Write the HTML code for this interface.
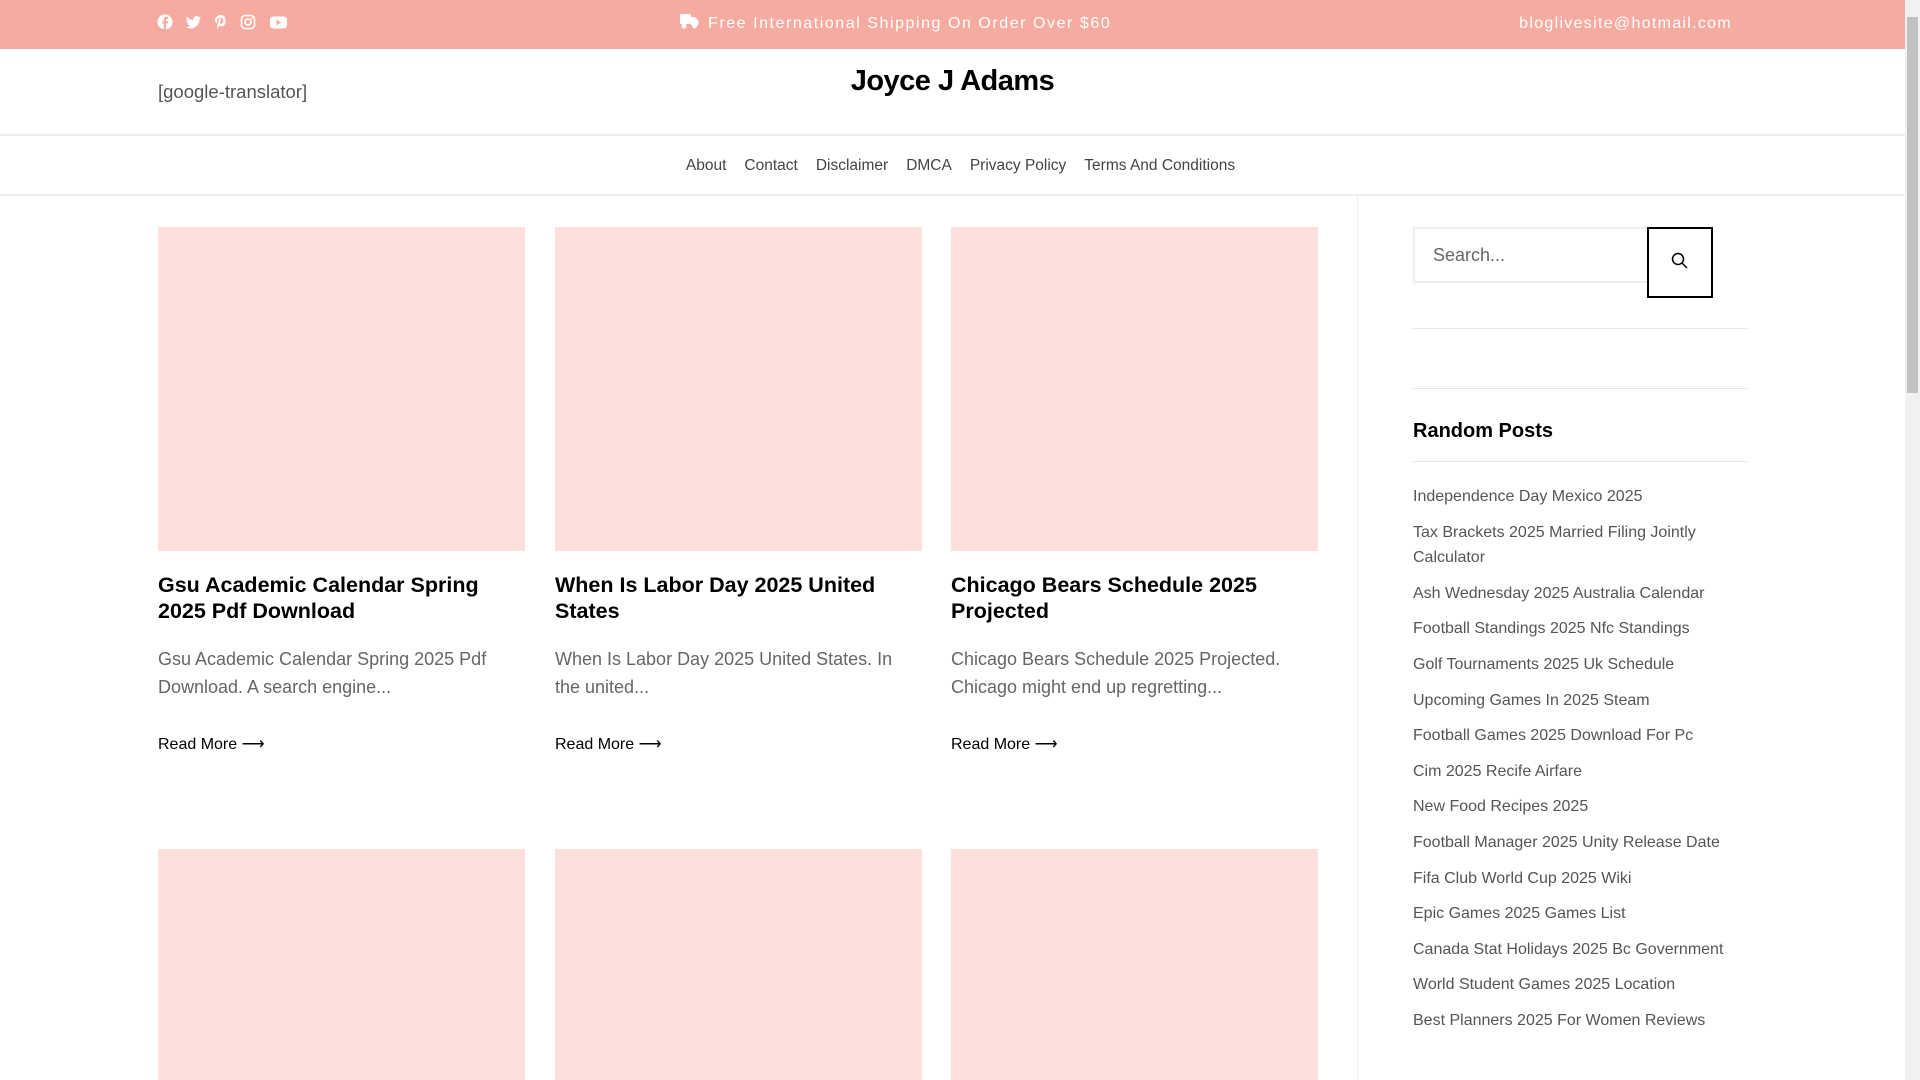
<!DOCTYPE html>
<html style="width:1920px;height:1080px;overflow:hidden"><head><meta charset="utf-8"><style>
*{margin:0;padding:0;box-sizing:border-box}
body{width:1920px;height:1080px;overflow:hidden;background:#fff;font-family:"Liberation Sans",Arial,sans-serif;color:#000;position:relative}
.a{position:absolute;white-space:nowrap}
#top{position:absolute;left:0;top:0;width:1905px;height:49px;background:#f5aba0}
.sb{position:absolute;right:0;top:0;width:15px;height:1080px;background:#f1f1f1}
.sb div{position:absolute;left:2px;top:17px;width:11px;height:376px;background:#c1c1c1}
.card{position:absolute;width:367px;height:324px;background:#fde0db}
.card2{position:absolute;width:367px;height:231px;background:#fde0db;top:849px}
.t{position:absolute;width:367px;font-size:21.5px;font-weight:bold;line-height:26px;color:#000}
.e{position:absolute;width:367px;font-size:18px;line-height:28px;color:#666}
.r{position:absolute;font-size:16px;color:#000}
.li{position:absolute;left:1413px;width:330px;font-size:16px;line-height:25px;color:#555}
.nav span{margin:0 9px}
</style></head><body>
<div id="top"></div>
<svg class="a" style="left:157px;top:14px" width="140" height="17" viewBox="0 0 140 17" fill="#fff">
<circle cx="8" cy="8" r="7.5"/><path d="M9 16V9.5h2l.3-2.3H9V6c0-.7.2-1.1 1.1-1.1h1.2V2.8c-.3 0-1-.1-1.8-.1-1.8 0-2.8 1-2.8 2.9v1.6H5v2.3h1.7V16z" fill="#f5aba0"/>
<path d="M44 3.5c-.6.3-1.2.4-1.8.5.7-.4 1.1-1 1.4-1.7-.6.4-1.300.6-2 .8a3.1 3.1 0 0 0-5.3 2.8c-2.6-.1-4.9-1.4-6.4-3.3-.9 1.5-.4 3.3.9 4.2-.5 0-1-.2-1.4-.4 0 1.5 1.1 2.8 2.5 3.1-.5.1-.9.2-1.4.1.4 1.3 1.6 2.1 2.9 2.2A6.3 6.3 0 0 1 28.8 13a8.9 8.9 0 0 0 13.7-7.9c.6-.4 1.1-1 1.5-1.6z"/>
<path d="M64 1c-3.9 0-6 2.6-6 5.1 0 1.5.8 3 2 3.4.3-1 .2-.9.1-1.6-.8-1.2 0-3.900 3.5-3.9 3.4 0 3.5 5.7.8 5.7-1 0-1.4-.8-1.1-1.7.3-1 .9-2.2.4-2.9-.6-.8-2.4-.2-2.200 1.8l-1.3 6c-.2 1 0 2.1.2 2.1.2 0 1.3-2 1.8-3.7.5.7 1.3 1 2.1 1 3 0 4.4-2.6 4.4-5.2C68.7 3.2 66.6 1 64 1z"/>
<rect x="84.5" y="1.5" width="13" height="13" rx="3.5" fill="none" stroke="#fff" stroke-width="1.6"/><circle cx="91" cy="8" r="3" fill="none" stroke="#fff" stroke-width="1.6"/><circle cx="94.8" cy="4.3" r=".9"/>
<rect x="113" y="2.5" width="17" height="12" rx="3"/><path d="M119.5 5.5v6l4.5-3z" fill="#f5aba0"/>
</svg>
<svg class="a" style="left:680px;top:13px" width="19" height="16" viewBox="0 0 19 16" fill="#fff"><rect x="0" y="1" width="11" height="10" rx="1"/><path d="M11 4h4l3.5 4v4H11z"/><circle cx="4" cy="13" r="2.5"/><circle cx="14.5" cy="13" r="2.5"/></svg>
<div class="a" style="left:708px;top:15px;font-size:16px;letter-spacing:1.55px;color:#fff">Free International Shipping On Order Over $60</div>
<div class="a" style="right:188px;top:15px;font-size:16px;letter-spacing:1.3px;color:#fff">bloglivesite@hotmail.com</div>

<div class="a" style="left:158px;top:81px;font-size:18.5px;color:#555">[google-translator]</div>
<div class="a" style="left:0;width:1905px;text-align:center;top:65px;font-size:29px;font-weight:bold;letter-spacing:-0.5px">Joyce J Adams</div>
<div class="a" style="left:0;top:134px;width:1905px;height:2px;background:#eee"></div>
<div class="a nav" style="left:8px;width:1905px;text-align:center;top:157px;font-size:15.5px;color:#444"><span>About</span><span>Contact</span><span>Disclaimer</span><span>DMCA</span><span>Privacy Policy</span><span>Terms And Conditions</span></div>
<div class="a" style="left:0;top:194px;width:1905px;height:2px;background:#eee"></div>
<div class="a" style="left:1357px;top:196px;width:1px;height:884px;background:#eee"></div>

<div class="card" style="left:158px;top:227px"></div>
<div class="card" style="left:555px;top:227px"></div>
<div class="card" style="left:951px;top:227px"></div>
<div class="t" style="left:158px;top:572px">Gsu Academic Calendar Spring 2025 Pdf Download</div>
<div class="t" style="left:555px;top:572px">When Is Labor Day 2025 United States</div>
<div class="t" style="left:951px;top:572px">Chicago Bears Schedule 2025 Projected</div>
<div class="e" style="left:158px;top:645px">Gsu Academic Calendar Spring 2025 Pdf Download. A search engine...</div>
<div class="e" style="left:555px;top:645px">When Is Labor Day 2025 United States. In the united...</div>
<div class="e" style="left:951px;top:645px">Chicago Bears Schedule 2025 Projected. Chicago might end up regretting...</div>
<div class="r" style="left:158px;top:734px">Read More ⟶</div>
<div class="r" style="left:555px;top:734px">Read More ⟶</div>
<div class="r" style="left:951px;top:734px">Read More ⟶</div>
<div class="card2" style="left:158px"></div>
<div class="card2" style="left:555px"></div>
<div class="card2" style="left:951px"></div>

<div class="a" style="left:1413px;top:227px;width:236px;height:56px;border:2px solid #eee"></div>
<div class="a" style="left:1433px;top:245px;font-size:18px;color:#666">Search...</div>
<div class="a" style="left:1647px;top:227px;width:66px;height:71px;border:2px solid #000;background:#fff"></div>
<svg class="a" style="left:1671px;top:252px" width="18" height="18" viewBox="0 0 18 18" fill="none" stroke="#000" stroke-width="1.5"><circle cx="7" cy="7" r="5.5"/><path d="M11 11l5 5"/></svg>
<div class="a" style="left:1413px;top:328px;width:334px;height:1px;background:#e5e5e5"></div>
<div class="a" style="left:1413px;top:388px;width:334px;height:1px;background:#e5e5e5"></div>
<div class="a" style="left:1413px;top:420px;font-size:20px;font-weight:bold">Random Posts</div>
<div class="a" style="left:1413px;top:461px;width:334px;height:1px;background:#e5e5e5"></div>
<div class="li" style="top:484px">Independence Day Mexico 2025</div>
<div class="li" style="top:520px">Tax Brackets 2025 Married Filing Jointly Calculator</div>
<div class="li" style="top:581px">Ash Wednesday 2025 Australia Calendar</div>
<div class="li" style="top:616px">Football Standings 2025 Nfc Standings</div>
<div class="li" style="top:652px">Golf Tournaments 2025 Uk Schedule</div>
<div class="li" style="top:688px">Upcoming Games In 2025 Steam</div>
<div class="li" style="top:723px">Football Games 2025 Download For Pc</div>
<div class="li" style="top:759px">Cim 2025 Recife Airfare</div>
<div class="li" style="top:794px">New Food Recipes 2025</div>
<div class="li" style="top:830px">Football Manager 2025 Unity Release Date</div>
<div class="li" style="top:866px">Fifa Club World Cup 2025 Wiki</div>
<div class="li" style="top:901px">Epic Games 2025 Games List</div>
<div class="li" style="top:937px">Canada Stat Holidays 2025 Bc Government</div>
<div class="li" style="top:972px">World Student Games 2025 Location</div>
<div class="li" style="top:1008px">Best Planners 2025 For Women Reviews</div>
<div class="sb"><div></div></div>
</body></html>
